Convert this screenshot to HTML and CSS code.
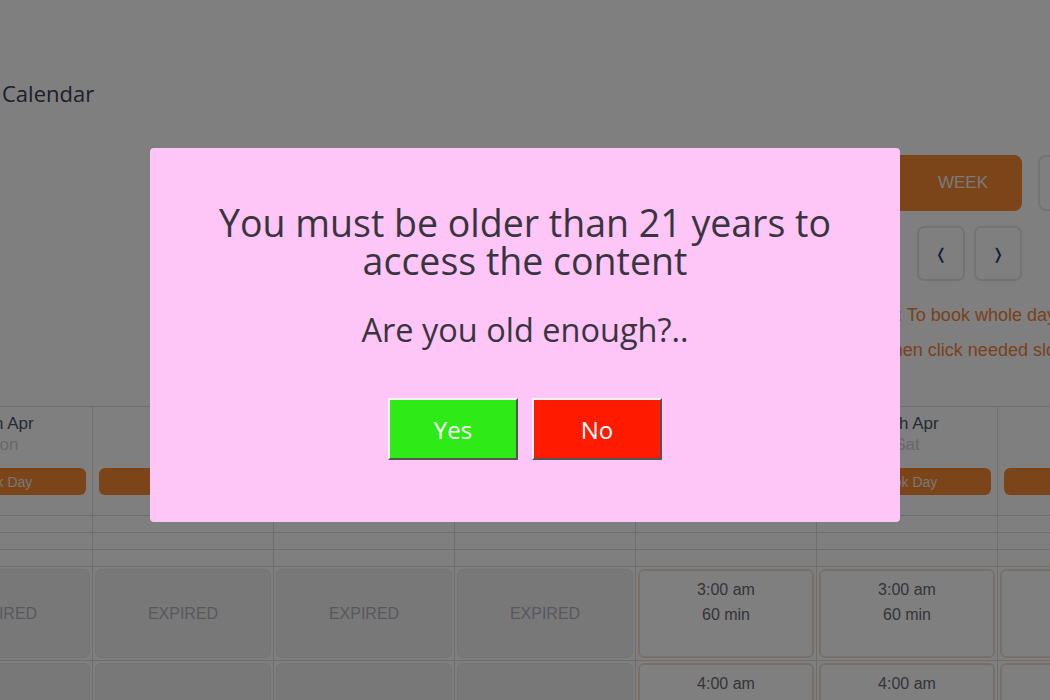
FILE: index.html
```html
<!DOCTYPE html>
<html lang="en">
<head>
    <meta charset="UTF-8">
    <title>Booking Calendar</title>
    <link rel="stylesheet" href="styles.css">
</head>
<body>

<div class="page">
    <h1 class="title">Calendar</h1>

    <div class="views">
        <button class="view">MONTH</button>
        <button class="view active">WEEK</button>
        <button class="view">DAY</button>
    </div>
    <div class="nav">
        <button class="nav-btn">&#10092;</button>
        <button class="nav-btn">&#10093;</button>
    </div>

    <div class="hints">
        <p>Press Book Day: To book whole day click Book Day</p>
        <p>Otherwise choose a date, then click needed slots to book them</p>
    </div>

    <div class="calendar">
        <!-- header row -->
        <div class="cell head"><div class="date">14th Apr</div><div class="dayname">Mon</div><button class="book">Book Day</button></div>
        <div class="cell head"><div class="date">15th Apr</div><div class="dayname">Tue</div><button class="book">Book Day</button></div>
        <div class="cell head"><div class="date">16th Apr</div><div class="dayname">Wed</div><button class="book">Book Day</button></div>
        <div class="cell head"><div class="date">17th Apr</div><div class="dayname">Thu</div><button class="book">Book Day</button></div>
        <div class="cell head"><div class="date">18th Apr</div><div class="dayname">Fri</div><button class="book">Book Day</button></div>
        <div class="cell head"><div class="date">19th Apr</div><div class="dayname">Sat</div><button class="book">Book Day</button></div>
        <div class="cell head"><div class="date">20th Apr</div><div class="dayname">Sun</div><button class="book">Book Day</button></div>

        <!-- all day rows -->
        <div class="cell thin"></div><div class="cell thin"></div><div class="cell thin"></div><div class="cell thin"></div><div class="cell thin"></div><div class="cell thin"></div><div class="cell thin"></div>
        <div class="cell thin"></div><div class="cell thin"></div><div class="cell thin"></div><div class="cell thin"></div><div class="cell thin"></div><div class="cell thin"></div><div class="cell thin"></div>
        <div class="cell thin"></div><div class="cell thin"></div><div class="cell thin"></div><div class="cell thin"></div><div class="cell thin"></div><div class="cell thin"></div><div class="cell thin"></div>

        <!-- 3:00 am -->
        <div class="cell slot"><div class="box expired">EXPIRED</div></div>
        <div class="cell slot"><div class="box expired">EXPIRED</div></div>
        <div class="cell slot"><div class="box expired">EXPIRED</div></div>
        <div class="cell slot"><div class="box expired">EXPIRED</div></div>
        <div class="cell slot"><div class="box free">3:00 am<br>60 min</div></div>
        <div class="cell slot"><div class="box free">3:00 am<br>60 min</div></div>
        <div class="cell slot"><div class="box free">3:00 am<br>60 min</div></div>

        <!-- 4:00 am -->
        <div class="cell slot"><div class="box expired">EXPIRED</div></div>
        <div class="cell slot"><div class="box expired">EXPIRED</div></div>
        <div class="cell slot"><div class="box expired">EXPIRED</div></div>
        <div class="cell slot"><div class="box expired">EXPIRED</div></div>
        <div class="cell slot"><div class="box free">4:00 am<br>60 min</div></div>
        <div class="cell slot"><div class="box free">4:00 am<br>60 min</div></div>
        <div class="cell slot"><div class="box free">4:00 am<br>60 min</div></div>
    </div>
</div>

<div class="overlay">
    <div class="modal">
        <h2>You must be older than 21 years to access the content</h2>
        <p>Are you old enough?..</p>
        <div class="answers">
            <button class="answer yes">Yes</button>
            <button class="answer no">No</button>
        </div>
    </div>
</div>

</body>
</html>
```

FILE: styles.css
```css
body {
    margin: 0;
    background: #fff;
    font-family: "Liberation Sans", Arial, sans-serif;
    overflow: hidden;
    height: 700px;
}
.page {
    width: 1267px;
    margin-left: -88px;
}
.title {
    margin: 78px 0 0;
    padding-left: 90px;
    font-family: "Open Sans", sans-serif;
    font-weight: normal;
    font-size: 22px;
    line-height: 30px;
    color: #3c3c50;
}
.views {
    display: flex;
    justify-content: flex-end;
    gap: 16px;
    margin: 47px 1px 0 0;
}
.view {
    width: 140px;
    height: 56px;
    border: 2px solid #e6e6e6;
    border-radius: 8px;
    background: #fff;
    color: #888;
    font-family: "Liberation Sans", Arial, sans-serif;
    font-size: 17px;
}
.view.active {
    width: 150px;
    padding-left: 38px;
    border-color: #f68a32;
    background: #f68a32;
    color: #f4f4f4;
}
.nav {
    display: flex;
    justify-content: flex-end;
    gap: 9px;
    margin: 15px 157px 0 0;
}
.nav-btn {
    width: 48px;
    height: 55px;
    border: 2px solid #e6e6e6;
    border-radius: 7px;
    background: #fff;
    color: #2e3a5a;
    font-size: 15px;
    font-family: "DejaVu Sans", sans-serif;
}
.hints {
    margin-top: 17px;
    text-align: right;
    white-space: nowrap;
}
.hints p {
    margin: 0;
    font-size: 18px;
    line-height: 35px;
    color: #f0843a;
}
.calendar {
    display: grid;
    grid-template-columns: repeat(7, 181px);
    margin-top: 38px;
    border-top: 1px solid #dcdce0;
}
.cell {
    border-right: 1px solid #dcdce0;
    border-bottom: 1px solid #dcdce0;
}
.head {
    padding: 7px 6px 20px;
    text-align: center;
}
.date {
    font-size: 17px;
    line-height: 20px;
    color: #4e5468;
}
.dayname {
    font-size: 17px;
    line-height: 21px;
    color: #d0d0d0;
}
.book {
    display: block;
    width: 100%;
    height: 27px;
    margin-top: 13px;
    border: none;
    border-radius: 6px;
    background: #f68a32;
    color: #f0f0f0;
    font-family: "Liberation Sans", Arial, sans-serif;
    font-size: 14px;
}
.thin {
    height: 16px;
}
.slot {
    box-sizing: border-box;
    height: 94px;
    padding: 2px;
}
.box {
    box-sizing: border-box;
    height: 89px;
    border-radius: 6px;
    text-align: center;
    font-size: 16px;
}
.expired {
    border: 1px solid #e8e8e8;
    background: #f0f0f0;
    color: #b0b0ba;
    line-height: 87px;
}
.free {
    border: 2px solid #f2dfd2;
    background: #fff;
    color: #6a6a70;
    padding-top: 6px;
    line-height: 25px;
}
.overlay {
    position: fixed;
    inset: 0;
    background: rgba(0,0,0,0.5);
    display: flex;
    justify-content: center;
    align-items: flex-start;
    padding-top: 148px;
}
.modal {
    width: 650px;
    padding: 56px 50px 62px;
    background: #fdc6f6;
    border-radius: 4px;
    text-align: center;
    font-family: "Open Sans", sans-serif;
    color: #3a3440;
}
.modal h2 {
    margin: 0;
    font-weight: normal;
    font-size: 37.5px;
    line-height: 38px;
}
.modal p {
    margin: 30px 0 0;
    font-size: 32.5px;
    line-height: 40px;
}
.answers {
    display: flex;
    justify-content: center;
    gap: 14px;
    margin-top: 48px;
}
.answer {
    width: 130px;
    height: 62px;
    border: 2px outset #ddd;
    border-color: #f4f4f4 #a8a8a8 #a8a8a8 #f4f4f4;
    color: #fff;
    font-family: "Open Sans", sans-serif;
    font-size: 24px;
}
.yes {
    background: #2eea16;
}
.no {
    background: #ff1a00;
}
```
